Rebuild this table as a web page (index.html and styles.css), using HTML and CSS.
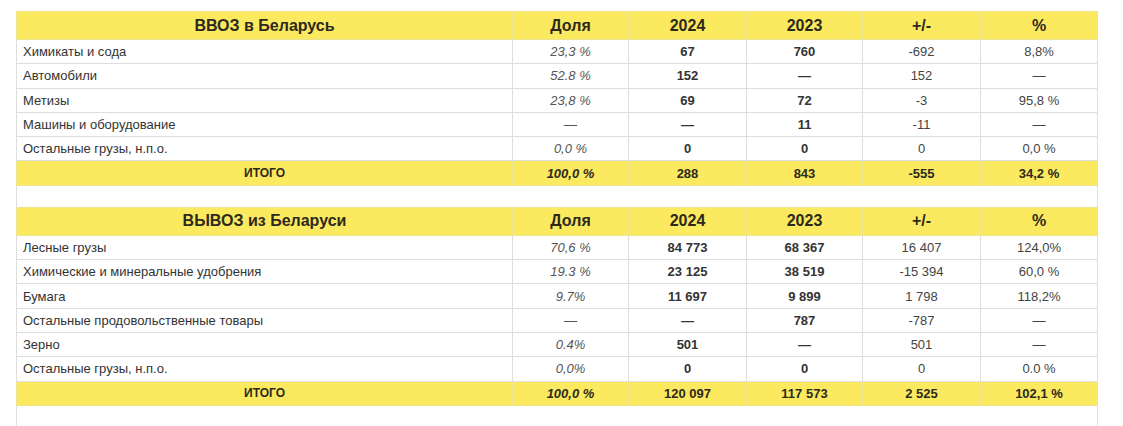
FILE: index.html
```html
<!DOCTYPE html>
<html lang="ru">
<head>
<meta charset="utf-8">
<title>ВВОЗ / ВЫВОЗ</title>
<link rel="stylesheet" href="styles.css">
</head>
<body>
<div class="wrap">
<table class="cargo">
  <colgroup>
    <col class="c-name"><col class="c-share"><col class="c-y24"><col class="c-y23"><col class="c-diff"><col class="c-pct">
  </colgroup>
  <tbody>
    <tr class="head"><th>ВВОЗ в Беларусь</th><th>Доля</th><th>2024</th><th>2023</th><th>+/-</th><th>%</th></tr>
    <tr><td class="name">Химикаты и сода</td><td class="share">23,3 %</td><td class="bold">67</td><td class="bold">760</td><td>-692</td><td>8,8%</td></tr>
    <tr><td class="name">Автомобили</td><td class="share">52.8 %</td><td class="bold">152</td><td class="bold">—</td><td>152</td><td>—</td></tr>
    <tr><td class="name">Метизы</td><td class="share">23,8 %</td><td class="bold">69</td><td class="bold">72</td><td>-3</td><td>95,8 %</td></tr>
    <tr><td class="name">Машины и оборудование</td><td class="share">—</td><td class="bold">—</td><td class="bold">11</td><td>-11</td><td>—</td></tr>
    <tr><td class="name">Остальные грузы, н.п.о.</td><td class="share">0,0 %</td><td class="bold">0</td><td class="bold">0</td><td>0</td><td>0,0 %</td></tr>
    <tr class="total"><td class="tlabel">ИТОГО</td><td class="share">100,0 %</td><td>288</td><td>843</td><td>-555</td><td>34,2 %</td></tr>
    <tr class="blank"><td colspan="6"></td></tr>
    <tr class="head"><th>ВЫВОЗ из Беларуси</th><th>Доля</th><th>2024</th><th>2023</th><th>+/-</th><th>%</th></tr>
    <tr><td class="name">Лесные грузы</td><td class="share">70,6 %</td><td class="bold">84 773</td><td class="bold">68 367</td><td>16 407</td><td>124,0%</td></tr>
    <tr><td class="name">Химические и минеральные удобрения</td><td class="share">19.3 %</td><td class="bold">23 125</td><td class="bold">38 519</td><td>-15 394</td><td>60,0 %</td></tr>
    <tr><td class="name">Бумага</td><td class="share">9.7%</td><td class="bold">11 697</td><td class="bold">9 899</td><td>1 798</td><td>118,2%</td></tr>
    <tr><td class="name">Остальные продовольственные товары</td><td class="share">—</td><td class="bold">—</td><td class="bold">787</td><td>-787</td><td>—</td></tr>
    <tr><td class="name">Зерно</td><td class="share">0.4%</td><td class="bold">501</td><td class="bold">—</td><td>501</td><td>—</td></tr>
    <tr><td class="name">Остальные грузы, н.п.о.</td><td class="share">0,0%</td><td class="bold">0</td><td class="bold">0</td><td>0</td><td>0.0 %</td></tr>
    <tr class="total"><td class="tlabel">ИТОГО</td><td class="share">100,0 %</td><td>120 097</td><td>117 573</td><td>2 525</td><td>102,1 %</td></tr>
    <tr class="blank last"><td colspan="6"></td></tr>
  </tbody>
</table>
</div>
</body>
</html>
```

FILE: styles.css
```css
html, body {
  margin: 0;
  padding: 0;
  background: #ffffff;
}

body {
  font-family: "Liberation Sans", Arial, Helvetica, sans-serif;
  color: #333333;
}

.wrap {
  padding: 11px 0 0 16px;
}

.cargo {
  border-collapse: collapse;
  table-layout: fixed;
  width: 1081px;
}

.c-name { width: 496px; }
.c-share { width: 116px; }
.c-y24 { width: 118px; }
.c-y23 { width: 116px; }
.c-diff { width: 118px; }
.c-pct { width: 117px; }

.cargo th,
.cargo td {
  border: 1px solid #dedede;
  padding: 0 6px;
  text-align: center;
  white-space: nowrap;
  overflow: hidden;
}

.cargo td {
  height: 23.3px;
  font-size: 13px;
  color: #444444;
}

.head th {
  height: 27px;
  background: #fbe95f;
  color: #2d2a1c;
  font-size: 16px;
  font-weight: bold;
  border-color: #ece48f;
}

.cargo td.name {
  text-align: left;
  color: #333333;
}

.cargo td.share {
  font-style: italic;
  color: #555555;
}

.cargo td.bold {
  font-weight: bold;
  color: #333333;
}

.total td {
  background: #fbe95f;
  font-weight: bold;
  color: #2d2a1c;
  border-color: #ece48f;
}

.total td.tlabel {
  font-size: 12px;
}

.total td.share {
  color: #2d2a1c;
}

.blank td {
  height: 21px;
  border-top: 1px solid #dedede;
  border-bottom: none;
}

.blank.last td {
  height: 40px;
}
```
